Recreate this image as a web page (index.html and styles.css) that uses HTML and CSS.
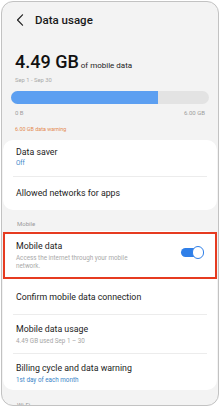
FILE: index.html
```html
<!DOCTYPE html>
<html>
<head>
<meta charset="utf-8">
<link rel="stylesheet" href="styles.css">
</head>
<body>
<div class="frame">
  <div class="header">
    <svg class="back" width="8" height="12" viewBox="0 0 8 12"><path d="M6.5 0.8 L1.5 6 L6.5 11.2" fill="none" stroke="#222" stroke-width="1.2" stroke-linecap="round" stroke-linejoin="round"/></svg>
    <span class="title">Data usage</span>
  </div>
  <div class="summary">
    <div class="amount"><span class="big">4.49 GB</span><span class="of">of mobile data</span></div>
    <div class="period">Sep 1 - Sep 30</div>
    <div class="bar"><div class="fill" style="width:74%"></div></div>
    <div class="scale"><span>0 B</span><span>6.00 GB</span></div>
    <div class="warning">6.00 GB data warning</div>
  </div>
  <div class="card">
    <div class="row two">
      <div class="t">Data saver</div>
      <div class="s blue">Off</div>
    </div>
    <div class="divider"></div>
    <div class="row one"><div class="t">Allowed networks for apps</div></div>
  </div>
  <div class="section">Mobile</div>
  <div class="card">
    <div class="row toggle-row">
      <div class="txt">
        <div class="t">Mobile data</div>
        <div class="s desc">Access the internet through your mobile network.</div>
      </div>
      <div class="switch"><div class="knob"></div></div>
      <div class="highlight"></div>
    </div>
    <div class="row one confirm"><div class="t">Confirm mobile data connection</div></div>
    <div class="divider"></div>
    <div class="row two usage">
      <div class="t">Mobile data usage</div>
      <div class="s gray">4.49 GB used Sep 1 – 30</div>
    </div>
    <div class="divider"></div>
    <div class="row two billing">
      <div class="t">Billing cycle and data warning</div>
      <div class="s blue">1st day of each month</div>
    </div>
  </div>
  <div class="section wifi">Wi-Fi</div>
</div>
</body>
</html>
```

FILE: styles.css
```css
* { box-sizing: border-box; }
html, body { margin: 0; padding: 0; background: #fff; }
body { font-family: Roboto, "Noto Sans", sans-serif; color: #1c1c1c; }

.frame {
  margin: 1px;
  width: 218px;
  height: 405px;
  border: 1px solid #c2c2c2;
  border-radius: 12px;
  overflow: hidden;
  background: #f3f3f3;
}

.header {
  height: 34px;
  display: flex;
  align-items: center;
  padding-left: 14px;
  padding-top: 1px;
}
.back { display: block; margin-top: 1px; }
.title { margin-left: 11px; font-size: 11.5px; font-weight: 500; color: #1a1a1a; }

.summary { padding: 16px 9px 0 9px; }
.amount { padding-left: 4px; line-height: 20px; height: 20px; display: flex; align-items: baseline; }
.big { font-size: 18px; font-weight: 500; color: #111; }
.of { font-size: 8px; margin-left: 2px; color: #222; }
.period { padding-left: 4px; font-size: 5.8px; line-height: 10px; color: #a8a8a8; margin-top: 3px; }
.bar { margin-top: 6px; height: 13px; border-radius: 7px; background: #e3e3e3; overflow: hidden; }
.fill { height: 100%; background: #5c9ff1; }
.scale { display: flex; justify-content: space-between; padding: 0 4px; margin-top: 5px; font-size: 6px; line-height: 8px; color: #9d9d9d; }
.warning { padding-left: 4px; margin-top: 8px; font-size: 5.4px; line-height: 8px; color: #e4894f; }

.card { margin: 7px 1px 0 1px; background: #fff; border-radius: 10px; }
.row { padding-left: 13px; padding-right: 13px; }
.t { font-size: 8.8px; line-height: 11px; color: #1c1c1c; }
.s { font-size: 6.3px; line-height: 10px; }
.blue { color: #3a85c8; }
.gray { color: #a6a6a6; }
.divider { height: 1px; background: #ececec; margin: 0 10px; }

.two { padding-top: 7px; padding-bottom: 8px; }
.one { padding-top: 11px; padding-bottom: 11px; }

.section { padding-left: 15px; margin-top: 10px; font-size: 6px; line-height: 8px; color: #9a9a9a; }
.section + .card { margin-top: 3px; }

.toggle-row { position: relative; display: flex; align-items: flex-start; padding-top: 10px; padding-bottom: 9.2px; }
.txt { flex: 1; }
.desc { color: #a9a9a9; line-height: 8.4px; margin-top: 2px; padding-right: 40px; }
.switch { margin-top: 6.5px; margin-right: 1px; width: 22px; height: 9.5px; border-radius: 5px; background: #2f7fe8; position: relative; }
.knob { position: absolute; right: -1px; top: -1.5px; width: 12.5px; height: 12.5px; border-radius: 50%; background: #fff; border: 1.5px solid #2f7fe8; }
.highlight { position: absolute; left: 0; right: 0; top: 1px; bottom: 1px; border: 2.8px solid #e63b20; pointer-events: none; }

.confirm { padding-top: 11.5px; padding-bottom: 11.5px; }
.usage { padding-top: 8.5px; padding-bottom: 7.3px; }
.usage .s { margin-top: 1.2px; }
.billing { padding-top: 9.5px; padding-bottom: 5.7px; }
.billing .s { margin-top: 0.3px; }
.wifi { margin-top: 11px; }
```
